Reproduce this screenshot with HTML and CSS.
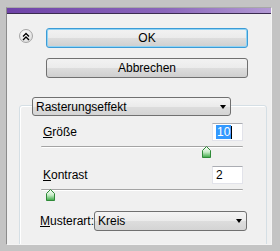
FILE: index.html
```html
<!DOCTYPE html>
<html lang="de">
<head>
    <meta charset="UTF-8">
    <title>Rasterungseffekt</title>
    <link rel="stylesheet" href="styles.css">
</head>
<body>
<div class="window">
    <div class="titlebar"></div>
    <div class="panel">
        <div class="actions">
            <span class="collapse">
                <svg width="8" height="9" viewBox="0 0 8 9">
                    <path d="M1 4.5 L4 1.5 L7 4.5 M1 8 L4 5 L7 8" fill="none" stroke="#000" stroke-width="1.4"/>
                </svg>
            </span>
            <div class="btn btn-focus">OK</div>
            <span></span>
            <div class="btn">Abbrechen</div>
        </div>

        <div class="group">
            <div class="select select-head">
                <span>Rasterungseffekt</span>
                <span class="caret"></span>
            </div>

            <div class="row row-first">
                <span class="label"><u>G</u>röße</span>
                <span class="field"><span class="sel">10</span><span class="cursor"></span></span>
            </div>
            <div class="slider"><span class="track"></span><span class="thumb" style="left: 161px;"><svg width="9" height="12" viewBox="0 0 9 12"><defs><linearGradient id="g1" x1="0" y1="0" x2="0" y2="1"><stop offset="0" stop-color="#fff"/><stop offset="0.5" stop-color="#c8ecc8"/><stop offset="1" stop-color="#3aa844"/></linearGradient></defs><polygon points="0.5,4.5 4.5,0.5 8.5,4.5 8.5,11.5 0.5,11.5" fill="url(#g1)" stroke="#2f8a38"/></svg></span></div>

            <div class="row">
                <span class="label"><u>K</u>ontrast</span>
                <span class="field">2</span>
            </div>
            <div class="slider slider-b"><span class="track"></span><span class="thumb" style="left: 5px;"><svg width="9" height="12" viewBox="0 0 9 12"><defs><linearGradient id="g2" x1="0" y1="0" x2="0" y2="1"><stop offset="0" stop-color="#fff"/><stop offset="0.5" stop-color="#c8ecc8"/><stop offset="1" stop-color="#3aa844"/></linearGradient></defs><polygon points="0.5,4.5 4.5,0.5 8.5,4.5 8.5,11.5 0.5,11.5" fill="url(#g2)" stroke="#2f8a38"/></svg></span></div>

            <div class="row row-pattern">
                <span class="label"><u>M</u>usterart:</span>
                <div class="select select-pattern">
                    <span>Kreis</span>
                    <span class="caret"></span>
                </div>
            </div>
        </div>
    </div>
</div>
</body>
</html>
```

FILE: styles.css
```css
html, body {
    margin: 0;
    height: 100%;
}
body {
    background: #c4c4c4;
    padding: 7px 8px 0 6px;
    box-sizing: border-box;
    overflow: hidden;
    font-family: "Liberation Sans", Arial, sans-serif;
    font-size: 12px;
    color: #000;
}
.window {
    height: 236px;
    border-left: 1px solid #8c8c8c;
    border-top: 1px solid #a8a8a8;
    border-right: 1px solid #f4f4f4;
    border-bottom: 1px solid #f4f4f4;
    background: #f0f0f0;
    overflow: hidden;
}
.titlebar {
    height: 5px;
    background: linear-gradient(to right, #6f43a8, #8a66bb 60%, #b39ad4);
    border-bottom: 1px solid #3b2c50;
}
.panel {
    padding: 14px 0 0 0;
}
.actions {
    display: grid;
    grid-template-columns: 14px 202px;
    column-gap: 13px;
    row-gap: 10px;
    margin-left: 12px;
}
.collapse {
    width: 14px;
    height: 14px;
    margin-top: 1px;
    box-sizing: border-box;
    border: 1px solid #a6a6a6;
    border-radius: 50%;
    background: radial-gradient(circle at 40% 35%, #ffffff, #e6e6e6 60%, #cfcfcf);
    display: flex;
    align-items: center;
    justify-content: center;
}
.btn {
    height: 20px;
    box-sizing: border-box;
    border: 1px solid #707070;
    border-radius: 3px;
    background: linear-gradient(#f2f2f2 0%, #ebebeb 50%, #dddddd 51%, #cfcfcf 100%);
    display: flex;
    align-items: center;
    justify-content: center;
}
.btn-focus {
    border-color: #3c9bd6;
    box-shadow: inset 0 0 0 1px #8fd3f4;
}
.group {
    margin: 27px 4px 0 12px;
    height: 160px;
    border: 1px solid #d5dfe5;
    border-radius: 3px;
    box-shadow: inset 1px 1px 0 #ffffff;
}
.select {
    height: 19px;
    box-sizing: border-box;
    border: 1px solid #707070;
    border-radius: 3px;
    background: linear-gradient(#f4f4f4 0%, #ebebeb 50%, #dddddd 51%, #d4d4d4 100%);
    display: flex;
    align-items: center;
    justify-content: space-between;
    padding: 0 4px 0 3px;
}
.select-head {
    width: 199px;
    margin: -9px 0 0 12px;
}
.caret {
    width: 0;
    height: 0;
    border-left: 3.5px solid transparent;
    border-right: 3.5px solid transparent;
    border-top: 4px solid #000;
}
.row {
    display: flex;
    align-items: center;
    justify-content: space-between;
    margin: 8px 23px 0 23px;
    height: 18px;
}
.row-first {
    margin-top: 7px;
}
.label u {
    text-decoration: underline;
}
.field {
    width: 31px;
    height: 18px;
    box-sizing: border-box;
    background: #fff;
    border: 1px solid #e2e3ea;
    border-top-color: #abadb3;
    display: flex;
    align-items: center;
    padding-left: 3px;
}
.sel {
    background: #3399ff;
    color: #fff;
    line-height: 14px;
    padding: 0 1px;
}
.cursor {
    width: 1px;
    height: 13px;
    background: #000;
}
.slider {
    position: relative;
    height: 12px;
    margin: 3px 23px 0 21px;
}
.slider-b {
    margin-top: 2px;
}
.track {
    display: block;
    height: 1px;
    margin-top: 5px;
    background: #a4a4a4;
    border-bottom: 1px solid #ffffff;
    border-radius: 1px;
}
.thumb {
    position: absolute;
    top: 0;
    width: 9px;
    height: 12px;
}
.thumb svg {
    display: block;
}
.row-pattern {
    margin: 10px 19px 0 20px;
    height: 20px;
}
.select-pattern {
    width: 153px;
    height: 20px;
}
```
